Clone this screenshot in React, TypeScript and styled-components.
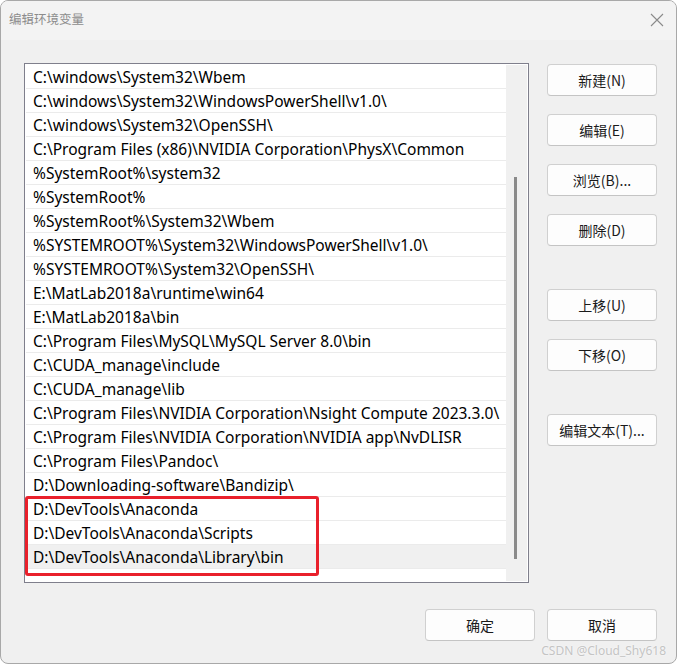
import React from 'react'
import styled, { createGlobalStyle } from 'styled-components'

const GlobalStyle = createGlobalStyle`
  html, body {
    margin: 0;
    padding: 0;
    background: #ffffff;
  }
  body {
    font-family: "Noto Sans", "Noto Sans CJK SC", sans-serif;
  }
`

const StyledWindow = styled('div')`
  position: relative;
  box-sizing: border-box;
  width: 677px;
  height: 664px;
  background-color: #f0f0f0;
  border: 1px solid #a8a8a8;
  border-radius: 8px;
  overflow: hidden;
  display: flex;
  flex-direction: column;
`

const StyledTitleBar = styled('div')`
  height: 39px;
  display: flex;
  align-items: center;
  justify-content: space-between;
  padding: 0 12px 0 8px;
  background-color: #f3f3f3;
`

const StyledTitle = styled('span')`
  font-family: "Noto Sans CJK SC", sans-serif;
  font-size: 12.5px;
  color: #8c8c8c;
  margin-top: -4px;
`

const StyledBody = styled('div')`
  display: flex;
  gap: 18px;
  padding: 23px 19px 0 23px;
`

const StyledList = styled('div')`
  position: relative;
  box-sizing: border-box;
  width: 506px;
  height: 520px;
  border: 1px solid #7f7f8c;
  background-color: #ffffff;
  padding: 1px;
  display: flex;
`

const StyledRows = styled('div')`
  flex: 1;
  display: flex;
  flex-direction: column;
`

const StyledRow = styled('div')<{ selected?: boolean }>`
  box-sizing: border-box;
  height: 24px;
  padding-left: 7px;
  display: flex;
  align-items: center;
  font-size: 15.5px;
  color: #000000;
  white-space: nowrap;
  overflow: hidden;
  border-bottom: 1px solid #ebebeb;
  background-color: ${p => p.selected ? '#f0f0f0' : 'transparent'};
`

const StyledScrollTrack = styled('div')`
  width: 21px;
  background-color: #f0f0f0;
  position: relative;
`

const StyledThumb = styled('div')`
  position: absolute;
  top: 112px;
  left: 8px;
  width: 3px;
  height: 382px;
  background-color: #8a8a8a;
`

const StyledMark = styled('div')`
  position: absolute;
  left: 0px;
  top: 432px;
  width: 294px;
  height: 80px;
  box-sizing: border-box;
  border: 3px solid #e9202b;
  border-radius: 3px;
`

const StyledButtons = styled('div')`
  display: flex;
  flex-direction: column;
  padding-top: 1px;
`

const StyledButton = styled('button')<{ gapTop?: number }>`
  box-sizing: border-box;
  width: 110px;
  height: 32px;
  margin-top: ${p => p.gapTop ?? 18}px;
  background-color: #fdfdfd;
  border: 1px solid #d0d0d0;
  border-bottom-color: #c4c4c4;
  border-radius: 4px;
  font-family: "Noto Sans CJK SC", sans-serif;
  font-size: 14px;
  color: #1a1a1a;
  padding: 0;
`

const StyledFooter = styled('div')`
  display: flex;
  justify-content: flex-end;
  gap: 12px;
  padding: 26px 19px 0 0;
`

const StyledWatermark = styled('span')`
  position: absolute;
  right: 10px;
  bottom: 4px;
  font-family: "Noto Sans", sans-serif;
  font-size: 12px;
  color: #c4c4c4;
  text-shadow: 0 0 2px #ffffff;
`

const paths = [
  'C:\\windows\\System32\\Wbem',
  'C:\\windows\\System32\\WindowsPowerShell\\v1.0\\',
  'C:\\windows\\System32\\OpenSSH\\',
  'C:\\Program Files (x86)\\NVIDIA Corporation\\PhysX\\Common',
  '%SystemRoot%\\system32',
  '%SystemRoot%',
  '%SystemRoot%\\System32\\Wbem',
  '%SYSTEMROOT%\\System32\\WindowsPowerShell\\v1.0\\',
  '%SYSTEMROOT%\\System32\\OpenSSH\\',
  'E:\\MatLab2018a\\runtime\\win64',
  'E:\\MatLab2018a\\bin',
  'C:\\Program Files\\MySQL\\MySQL Server 8.0\\bin',
  'C:\\CUDA_manage\\include',
  'C:\\CUDA_manage\\lib',
  'C:\\Program Files\\NVIDIA Corporation\\Nsight Compute 2023.3.0\\',
  'C:\\Program Files\\NVIDIA Corporation\\NVIDIA app\\NvDLISR',
  'C:\\Program Files\\Pandoc\\',
  'D:\\Downloading-software\\Bandizip\\',
  'D:\\DevTools\\Anaconda',
  'D:\\DevTools\\Anaconda\\Scripts',
  'D:\\DevTools\\Anaconda\\Library\\bin',
]

const CloseIcon = () => (
  <svg width="14" height="14" viewBox="0 0 14 14" style={{ marginTop: -2 }}>
    <path d="M1 1 L13 13 M13 1 L1 13" stroke="#8a8a8a" strokeWidth="1.1" fill="none" />
  </svg>
)

const App = () => {
  return (
    <>
      <GlobalStyle />
      <StyledWindow>
        <StyledTitleBar>
          <StyledTitle>编辑环境变量</StyledTitle>
          <CloseIcon />
        </StyledTitleBar>
        <StyledBody>
          <StyledList>
            <StyledRows>
              {paths.map((p, i) => (
                <StyledRow key={i} selected={i === paths.length - 1}>{p}</StyledRow>
              ))}
            </StyledRows>
            <StyledScrollTrack>
              <StyledThumb />
            </StyledScrollTrack>
            <StyledMark />
          </StyledList>
          <StyledButtons>
            <StyledButton gapTop={0}>新建(N)</StyledButton>
            <StyledButton>编辑(E)</StyledButton>
            <StyledButton>浏览(B)...</StyledButton>
            <StyledButton>删除(D)</StyledButton>
            <StyledButton gapTop={43}>上移(U)</StyledButton>
            <StyledButton>下移(O)</StyledButton>
            <StyledButton gapTop={43}>编辑文本(T)...</StyledButton>
          </StyledButtons>
        </StyledBody>
        <StyledFooter>
          <StyledButton gapTop={0}>确定</StyledButton>
          <StyledButton gapTop={0}>取消</StyledButton>
        </StyledFooter>
        <StyledWatermark>CSDN @Cloud_Shy618</StyledWatermark>
      </StyledWindow>
    </>
  )
}

export default App
